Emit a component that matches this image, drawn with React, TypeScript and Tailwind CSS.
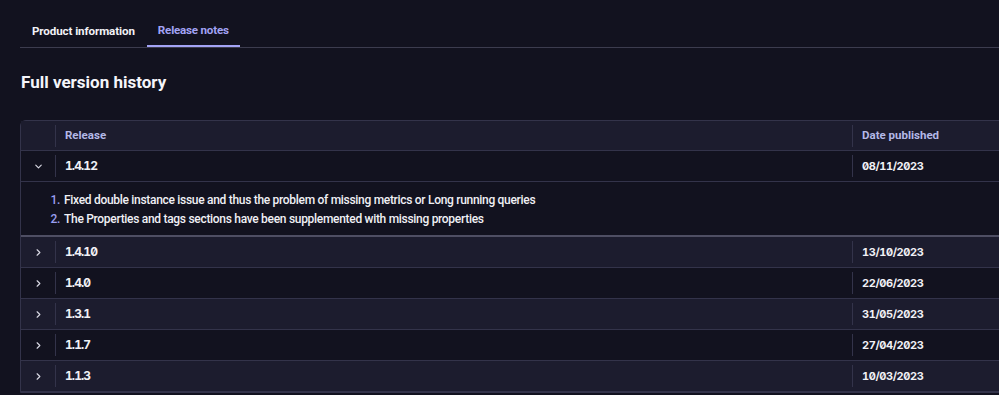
import { ChevronDown, ChevronRight } from 'lucide-react'

const releases = [
    { version: '1.4.12', date: '08/11/2023', open: true },
    { version: '1.4.10', date: '13/10/2023' },
    { version: '1.4.0', date: '22/06/2023' },
    { version: '1.3.1', date: '31/05/2023' },
    { version: '1.1.7', date: '27/04/2023' },
    { version: '1.1.3', date: '10/03/2023' },
]

const notes = [
    'Fixed double instance issue and thus the problem of missing metrics or Long running queries',
    'The Properties and tags sections have been supplemented with missing properties',
]

const sans = "font-['Roboto','Liberation_Sans',sans-serif]"
const num = "font-['Inter','Roboto',sans-serif] [font-feature-settings:'zero'_1,'tnum'_1]"

function Divider() {
    return <div className="w-px h-[22px] bg-[#33334a] shrink-0" />
}

export default function App() {
    return (
        <div className={`w-[999px] h-[395px] overflow-hidden bg-[#12121f] text-[#f0f0f5] ${sans}`}>
            {/* Tabs */}
            <div className="pt-[16px] pl-5">
                <div className="flex border-b border-[#3c3c4e] h-[32px]">
                    <button className="px-[12px] text-[11.6px] font-bold tracking-[-0.1px] text-[#f2f2f7] h-full">Product information</button>
                    <button className="px-[11px] text-[11.6px] font-bold tracking-[-0.2px] text-[#a3a3f5] h-full border-b-2 border-[#a3a3f5] -mb-px">
                        Release notes
                    </button>
                </div>
            </div>

            <h2 className="pl-[21px] mt-[22px] text-[17px] font-bold leading-[24px] text-[#f5f5fa]">Full version history</h2>

            {/* Table */}
            <div className="ml-5 mt-[26px] w-[1010px] border border-[#33334a] rounded-tl-md">
                <div className="flex items-center h-[30px] bg-[#1c1c2e] border-b border-[#33334a] text-[11.5px] font-bold text-[#b3b8e6]">
                    <div className="w-[34px]" />
                    <Divider />
                    <div className="w-[796px] pl-[9px]">Release</div>
                    <Divider />
                    <div className="pl-[9px]">Date published</div>
                </div>

                {releases.map((r, i) => (
                    <div key={r.version}>
                        <div
                            className={`flex items-center h-[31px] border-b border-[#33334a] ${
                                i % 2 === 1 ? 'bg-[#1c1c2e]' : 'bg-[#12121f]'
                            }`}
                        >
                            <div className="w-[34px] flex justify-center text-[#d8d8e3]">
                                {r.open ? <ChevronDown size={11} strokeWidth={2.5} /> : <ChevronRight size={11} strokeWidth={2.5} />}
                            </div>
                            <Divider />
                            <div className={`w-[796px] pl-[9px] text-[12px] font-bold tracking-[-0.9px] ${num}`}>{r.version}</div>
                            <Divider />
                            <div className={`pl-[9px] text-[11px] font-bold tracking-[-0.4px] ${num}`}>{r.date}</div>
                        </div>
                        {r.open && (
                            <div className="h-[55px] border-b-2 border-[#4e4e63] bg-[#12121f] pt-[9px]">
                                <ol className="text-[12px] font-medium leading-[19px] tracking-[-0.3px]">
                                    {notes.map((n, j) => (
                                        <li key={j} className="flex">
                                            <span className="w-[43px] text-right pr-[4px] text-[#9a9ef0]">{j + 1}.</span>
                                            <span className="text-[#f0f0f5]">{n}</span>
                                        </li>
                                    ))}
                                </ol>
                            </div>
                        )}
                    </div>
                ))}
            </div>
        </div>
    )
}
